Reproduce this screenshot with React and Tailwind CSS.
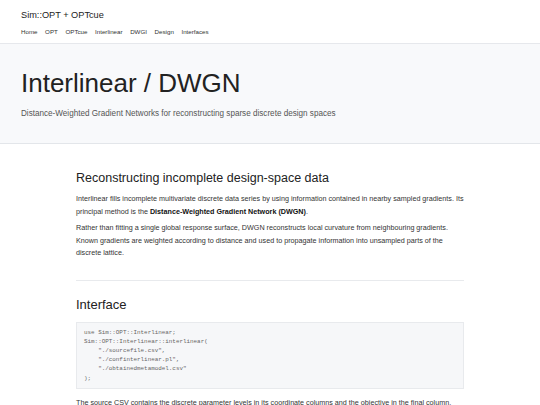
const navItems = ["Home", "OPT", "OPTcue", "Interlinear", "DWGI", "Design", "Interfaces"];

const code = `use Sim::OPT::Interlinear;
Sim::OPT::Interlinear::interlinear(
    "./sourcefile.csv",
    "./confinterlinear.pl",
    "./obtainedmetamodel.csv"
);`;

const App = () => {
  return (
    <div className="min-h-[405px] bg-white text-[#222] font-['Liberation_Sans',Arial,sans-serif]">
      <header className="border-b border-[#e6e8ec] px-[21px] pt-[8px] pb-[7px]">
        <div className="text-[9.2px] leading-[14px] text-[#222]">Sim::OPT + OPTcue</div>
        <nav className="mt-[5px] flex gap-[7.6px] text-[6.2px] leading-[9px] text-[#333]">
          {navItems.map((item) => (
            <span key={item}>{item}</span>
          ))}
        </nav>
      </header>

      <section className="bg-[#f8f9fb] border-b border-[#e3e6ea] px-[21px] pt-[22px] pb-[24px]">
        <h1 className="text-[26px] leading-[34px] text-[#222]">Interlinear / DWGN</h1>
        <p className="mt-[9px] text-[8.15px] leading-[10px] text-[#555]">
          Distance-Weighted Gradient Networks for reconstructing sparse discrete design spaces
        </p>
      </section>

      <main className="mx-auto w-[388px] pt-[26px]">
        <h2 className="text-[12.5px] leading-[16px] text-[#222]">
          Reconstructing incomplete design-space data
        </h2>
        <p className="mt-[7px] text-[7.2px] leading-[12.5px] text-[#333]">
          Interlinear fills incomplete multivariate discrete data series by using information contained in nearby sampled gradients. Its principal method is the{" "}
          <strong className="font-bold text-[#111]">Distance-Weighted Gradient Network (DWGN)</strong>.
        </p>
        <p className="mt-[4px] text-[7.2px] leading-[12.5px] text-[#333]">
          Rather than fitting a single global response surface, DWGN reconstructs local curvature from neighbouring gradients. Known gradients are weighted according to distance and used to propagate information into unsampled parts of the discrete lattice.
        </p>

        <hr className="mt-[20px] border-0 border-t border-[#e8eaed]" />

        <h2 className="mt-[16px] text-[13px] leading-[16px] text-[#222]">Interface</h2>
        <pre className="mt-[9px] bg-[#f6f7f9] border border-[#e8eaed] px-[7px] pt-[5px] pb-[5px] text-[5.9px] leading-[9.2px] text-[#666] font-['Liberation_Mono',monospace]">
          {code}
        </pre>
        <p className="mt-[8px] whitespace-nowrap text-[7.2px] leading-[12.5px] text-[#333]">
          The source CSV contains the discrete parameter levels in its coordinate columns and the objective in the final column.
        </p>
      </main>
    </div>
  );
};

export default App;
